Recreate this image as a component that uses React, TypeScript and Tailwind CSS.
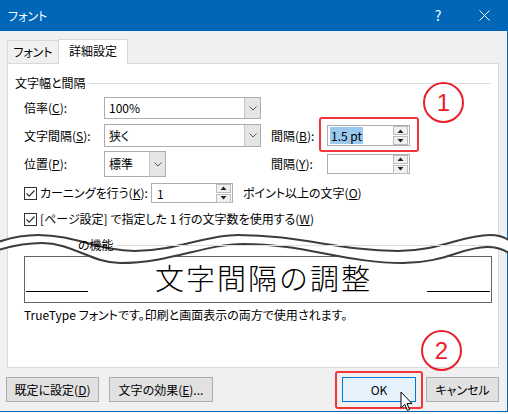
import React from 'react';

const UPPER =
  'M -2 242 C 10 238, 25 235, 38 235 C 75 235, 100 251, 135 251 C 175 251, 205 235, 238 235 C 300 235, 340 251, 398 251 C 440 251, 462 235, 490 235 C 500 235, 506 238, 510 241';
const LOWER =
  'M -2 250 C 12 246, 28 243, 42 243 C 72 243, 92 263, 120 263 C 170 263, 205 244, 243 244 C 305 244, 345 263, 403 263 C 445 263, 462 247, 487 247 C 497 247, 505 250, 510 254';
const LOWER_REV =
  'L 510 254 C 505 250, 497 247, 487 247 C 462 247, 445 263, 403 263 C 345 263, 305 244, 243 244 C 205 244, 170 263, 120 263 C 92 263, 72 243, 42 243 C 28 243, 12 246, -2 250 Z';

function Chevron() {
  return (
    <svg width="8" height="5" viewBox="0 0 8 5">
      <path d="M0.5 0.5 L4 4 L7.5 0.5" fill="none" stroke="#5a5a5a" strokeWidth="1" />
    </svg>
  );
}

function Combo({ value, className }: { value: string; className: string }) {
  return (
    <div className={`flex border border-[#ABADB3] bg-white ${className}`}>
      <div className="flex-1 flex items-center pl-[4px] text-[12px]">{value}</div>
      <div className="w-[16px] flex items-center justify-center bg-[#E5E5E5] border-l border-[#C4C4C4]">
        <Chevron />
      </div>
    </div>
  );
}

function SpinBtn({ up }: { up?: boolean }) {
  return (
    <div className="w-[15px] h-[9px] flex items-center justify-center border border-[#BDBDBD] bg-[#F0F0F0]">
      <svg width="7" height="4" viewBox="0 0 7 4">
        <polygon points={up ? '0.5,4 3.5,0.5 6.5,4' : '0.5,0 3.5,3.5 6.5,0'} fill="#222" />
      </svg>
    </div>
  );
}

function Spin({ children, className }: { children?: React.ReactNode; className: string }) {
  return (
    <div className={`flex items-center border border-[#ABADB3] bg-white ${className}`}>
      <div className="flex-1 pl-[2px] text-[12px] leading-[15px]">{children}</div>
      <div className="flex flex-col gap-px mr-px">
        <SpinBtn up />
        <SpinBtn />
      </div>
    </div>
  );
}

function Check() {
  return (
    <div className="shrink-0 w-[13px] h-[13px] border border-[#333] bg-white flex items-center justify-center">
      <svg width="11" height="11" viewBox="0 0 11 11">
        <path d="M1.5 5.5 L4.2 8.2 L9.5 2.5" fill="none" stroke="#333" strokeWidth="1.2" />
      </svg>
    </div>
  );
}

function Btn({ children, className }: { children: React.ReactNode; className: string }) {
  return (
    <div className={`h-[25px] flex items-center justify-center border text-[12px] ${className}`}>
      {children}
    </div>
  );
}

export default function App() {
  return (
    <div className="relative w-[508px] h-[414px] bg-white overflow-hidden whitespace-nowrap text-black [font-feature-settings:'palt'] font-['Noto_Sans_CJK_JP','Noto_Sans',sans-serif]">
      <div className="w-[508px] h-[412px] flex flex-col bg-[#F0F0F0] border-r border-b border-[#0067B8]">
        {/* title bar */}
        <div className="h-[31px] flex items-center bg-[#0067B8] text-white">
          <span className="pl-[8px] text-[12px]">フォント</span>
          <div className="ml-auto w-[46px] flex justify-center text-[14px]">?</div>
          <div className="w-[46px] flex justify-center">
            <svg width="11" height="11" viewBox="0 0 11 11">
              <path d="M0.5 0.5 L10.5 10.5 M10.5 0.5 L0.5 10.5" stroke="#fff" strokeWidth="1" />
            </svg>
          </div>
        </div>

        {/* tabs */}
        <div className="mt-[8px] ml-[7px] h-[24px] flex items-end text-[12px]">
          <div className="w-[52px] h-[23px] flex items-center justify-center border border-b-0 border-[#D9D9D9] bg-[#F0F0F0]">
            フォント
          </div>
          <div className="relative z-[1] -ml-px -mb-px w-[70px] h-[25px] pb-[2px] flex items-center justify-center border border-b-0 border-[#D9D9D9] bg-white">
            詳細設定
          </div>
        </div>

        {/* panel */}
        <div className="ml-[7px] w-[492px] h-[305px] flex flex-col border border-[#D9D9D9] bg-white pl-[7px] pr-[7px] text-[12px] leading-[14px]">
          <div className="mt-[12px] h-[14px] flex items-center">
            <span>文字幅と間隔</span>
            <div className="flex-1 ml-[3px] h-px bg-[#DCDCDC]" />
          </div>

          <div className="mt-[7px] h-[22px] pl-[9px] flex items-center">
            <span className="w-[80px]">
              倍率(<u>C</u>):
            </span>
            <Combo value="100%" className="w-[157px] h-[22px]" />
          </div>

          <div className="mt-[5px] h-[23px] pl-[9px] flex items-center">
            <span className="w-[80px]">
              文字間隔(<u>S</u>):
            </span>
            <Combo value="狭く" className="w-[157px] h-[23px]" />
            <span className="ml-[10px] w-[56px]">
              間隔(<u>B</u>):
            </span>
            <Spin className="w-[83px] h-[21px]">
              <span className="bg-[#99C9EF] px-px">1.5 pt</span>
            </Spin>
          </div>

          <div className="mt-[4px] h-[26px] pl-[9px] flex items-center">
            <span className="w-[80px]">
              位置(<u>P</u>):
            </span>
            <Combo value="標準" className="w-[62px] h-[26px]" />
            <span className="ml-[105px] w-[56px]">
              間隔(<u>Y</u>):
            </span>
            <Spin className="w-[83px] h-[20px]" />
          </div>

          <div className="mt-[6px] h-[20px] pl-[9px] flex items-center">
            <Check />
            <span className="ml-[3px] w-[111px] shrink-0">
              カーニングを行う(<u>K</u>):
            </span>
            <Spin className="w-[82px] h-[20px] shrink-0">
              <span className="pl-[3px]">1</span>
            </Spin>
            <span className="ml-[10px]">
              ポイント以上の文字(<u>O</u>)
            </span>
          </div>

          <div className="mt-[9px] h-[14px] pl-[9px] flex items-center">
            <Check />
            <span className="ml-[3px]">
              [ページ設定] で指定した 1 行の文字数を使用する(<u>W</u>)
            </span>
          </div>

          <div className="relative z-20 mt-[12px] h-[14px] flex items-center">
            <span className="ml-[63px]">の機能</span>
            <div className="flex-1 ml-[3px] h-px bg-[#DCDCDC]" />
          </div>

          <div className="mt-[4px] ml-[9px] w-[468px] h-[47px] flex items-start border border-[#646464] px-px [font-feature-settings:normal]">
            <div className="mt-[34px] w-[62px] h-px bg-black" />
            <div className="ml-[67px] mt-[6px] text-[29px] leading-[29px] tracking-[2px] font-light">
              文字間隔の調整
            </div>
            <div className="ml-auto mt-[34px] w-[63px] h-px bg-black" />
          </div>

          <div className="mt-[5px] h-[14px] pl-[9px] flex items-center">
            TrueType フォントです。印刷と画面表示の両方で使用されます。
          </div>
        </div>

        {/* buttons */}
        <div className="mt-[9px] flex items-center pl-[6px] pr-[8px]">
          <Btn className="w-[93px] bg-[#E1E1E1] border-[#ADADAD]">
            既定に設定(<u>D</u>)
          </Btn>
          <Btn className="ml-[10px] w-[104px] bg-[#E1E1E1] border-[#ADADAD]">
            文字の効果(<u>E</u>)...
          </Btn>
          <Btn className="ml-auto w-[74px] bg-[#E5F1FB] border-[#0078D7]">OK</Btn>
          <Btn className="ml-[10px] w-[73px] bg-[#E1E1E1] border-[#ADADAD]">キャンセル</Btn>
        </div>
      </div>

      {/* cut-away wave band */}
      <svg
        className="absolute left-0 top-0 z-10 pointer-events-none"
        width="508"
        height="414"
        viewBox="0 0 508 414"
      >
        <path d={`${UPPER} ${LOWER_REV}`} fill="#fff" />
        <path d={UPPER} fill="none" stroke="#3c3c3c" strokeWidth="2" />
        <path d={LOWER} fill="none" stroke="#3c3c3c" strokeWidth="2" />
      </svg>

      {/* annotations */}
      <div className="absolute z-30 left-[319px] top-[117px] w-[100px] h-[35px] border-2 border-[#F0353B] rounded-[3px]" />
      <div className="absolute z-30 left-[335px] top-[371px] w-[88px] h-[38px] border-2 border-[#F0353B] rounded-[3px]" />
      <div className="absolute z-30 left-[423px] top-[82px] w-[41px] h-[41px] rounded-full border-2 border-[#E8202A] flex items-center justify-center text-[#E8202A] text-[24px] leading-none font-['Liberation_Sans',sans-serif]">
        1
      </div>
      <div className="absolute z-30 left-[421px] top-[330px] w-[41px] h-[41px] rounded-full border-2 border-[#E8202A] flex items-center justify-center text-[#E8202A] text-[24px] leading-none font-['Liberation_Sans',sans-serif]">
        2
      </div>

      {/* mouse pointer */}
      <svg className="absolute z-40 left-[400px] top-[391px]" width="13" height="21" viewBox="0 0 13 21">
        <path
          d="M1 1 L1 17 L4.8 13.4 L7.4 19.4 L9.6 18.5 L7 12.6 L12 12.6 Z"
          fill="#fff"
          stroke="#000"
          strokeWidth="1"
          strokeLinejoin="round"
        />
      </svg>
    </div>
  );
}
